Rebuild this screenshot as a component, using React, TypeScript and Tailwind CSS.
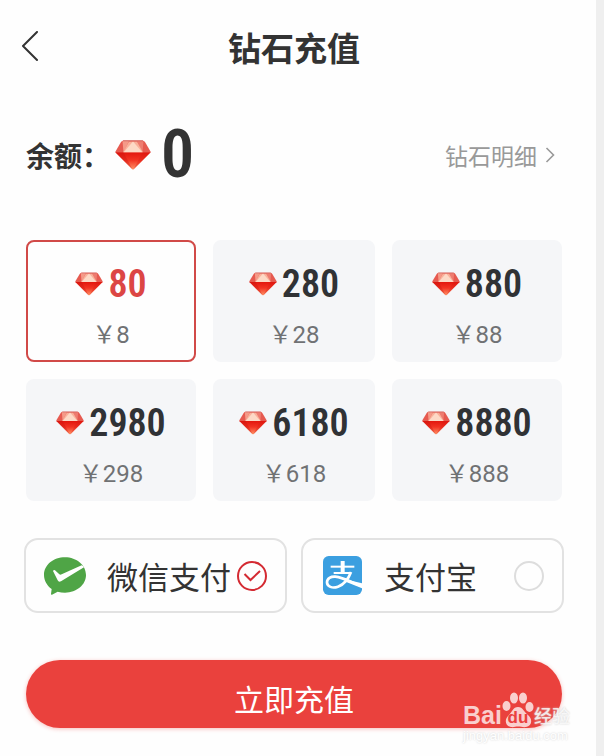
import { useId, useState } from "react";

const cjk = "font-['Noto_Sans_CJK_SC',sans-serif]";
const condensed = "font-['Roboto_Condensed',Roboto,sans-serif]";

const packages = [
  { diamonds: 80, price: 8 },
  { diamonds: 280, price: 28 },
  { diamonds: 880, price: 88 },
  { diamonds: 2980, price: 298 },
  { diamonds: 6180, price: 618 },
  { diamonds: 8880, price: 888 },
];

function Diamond({ className }: { className: string }) {
  const id = useId();
  return (
    <svg viewBox="0 0 36 30" className={className} aria-hidden="true">
      <defs>
        <linearGradient id={id} x1="0" y1="0" x2="0" y2="1">
          <stop offset="0" stopColor="#e3170e" />
          <stop offset="0.45" stopColor="#f23322" />
          <stop offset="1" stopColor="#ff9468" />
        </linearGradient>
      </defs>
      <path d="M8.5 .5H27.5Q29 .5 30 2L35.5 11.5Q36 12.5 35 13H1Q0 12.5 .5 11.5L6 2Q7 .5 8.5 .5Z" fill="#e65a50" />
      <path d="M7.5 1L14 1L8.5 12.5Z" fill="#f59a88" />
      <path d="M28.5 1L22 1L27.5 12.5Z" fill="#ee7c70" />
      <path d="M14 1.5H22L28 12.5H8Z" fill="#f9b09a" />
      <path d="M18 1.5L27.5 12.5H8.5Z" fill="#fdd9c6" />
      <path d="M.5 12.5H35.5L19 29Q18 30 17 29Z" fill={`url(#${id})`} />
      <path d="M.5 12.5H8.5L17.5 29.5Z" fill="#c91410" opacity=".35" />
      <path d="M35.5 12.5H27.5L18.5 29.5Z" fill="#d81c14" opacity=".3" />
      <path d="M8 .8H28" stroke="#d0605a" strokeWidth=".8" />
    </svg>
  );
}

function WechatPayIcon() {
  return (
    <svg viewBox="0 0 126 114" className="h-[38px] w-[42px]" aria-hidden="true">
      <path
        d="M63 1C28 1 0 24 0 54c0 17 9 32 23 42l-2 15c0 2 1 3 3 2l17-9c7 2 14 3 22 3 35 0 63-24 63-53S98 1 63 1Z"
        fill="#4fa546"
      />
      <path d="M27 42q2-4 6-2l13 12q3 2 7 0l60-27q5 1 7 6L51 73q-7 4-10-3Z" fill="#fff" />
    </svg>
  );
}

function AlipayIcon() {
  return (
    <svg viewBox="0 0 117 117" className="h-[39px] w-[39px]" aria-hidden="true">
      <rect width="117" height="117" rx="17" fill="#3b9fe0" />
      <g fill="none" stroke="#fff">
        <path d="M59 15V50" strokeWidth="12" />
        <path d="M23 32H94" strokeWidth="6" />
        <path d="M32 51H84" strokeWidth="6" />
        <path
          d="M84 48C76 70 62 86 45 92C28 98 12 92 12 79C12 67 24 61 37 62C58 64 80 76 117 91"
          strokeWidth="8"
        />
      </g>
      <path d="M72 71L117 82V97L68 77Z" fill="#fff" />
    </svg>
  );
}

const methods = [
  { id: "wechat", name: "微信支付", icon: <WechatPayIcon /> },
  { id: "alipay", name: "支付宝", icon: <AlipayIcon /> },
];

function Watermark() {
  return (
    <div className="pointer-events-none absolute top-[692px] right-[34px] w-[107px] text-white/75">
      <div className="flex h-9 items-end">
        <span className="font-['Liberation_Sans',sans-serif] text-[25px] leading-[26px] font-bold">Bai</span>
        <span className="relative h-9 w-8 shrink-0">
          <svg viewBox="0 0 32 36" className="h-9 w-8" fill="currentColor" aria-hidden="true">
            <ellipse cx="4.5" cy="14" rx="4" ry="5" />
            <ellipse cx="12" cy="6" rx="4" ry="5.5" />
            <ellipse cx="21" cy="6" rx="4" ry="5.5" />
            <ellipse cx="27.5" cy="15" rx="4" ry="5" />
            <path d="M16 15c-5 0-6 5-9 8-5 4-4 11 2 12 3 .5 4-.5 7-.5s5 1 8 .5c6-1 7-8 2-12-4-3-5-8-10-8Z" />
          </svg>
          <span className="absolute inset-x-0 bottom-0 text-center font-['Liberation_Sans',sans-serif] text-[17px] leading-5 font-bold text-[#ea413d]">
            du
          </span>
        </span>
        <span className={`${cjk} text-[18px] leading-[26px] font-medium whitespace-nowrap [text-shadow:0_0_2px_#cccccc]`}>
          经验
        </span>
      </div>
      <div className="font-['Liberation_Sans',sans-serif] text-[13px] leading-4 text-white [text-shadow:0_0_2px_#cccccc]">
        jingyan.baidu.com
      </div>
    </div>
  );
}

export default function App() {
  const [selected, setSelected] = useState(80);
  const [method, setMethod] = useState("wechat");

  return (
    <div className="relative min-h-screen bg-[#efefef] pr-2">
      <main className={`${cjk} min-h-screen bg-[#fefefe] pr-8 pl-6 text-[#333333]`}>
        <header className="grid h-[94px] grid-cols-[40px_1fr_40px] items-center">
          <button type="button" aria-label="返回" className="-ml-1 flex h-10 w-6 items-center">
            <svg viewBox="0 0 20 32" className="h-8 w-5" fill="none" stroke="#333333" strokeWidth="2" aria-hidden="true">
              <path d="M17 1L3 15L17 29" strokeLinecap="round" strokeLinejoin="round" />
            </svg>
          </button>
          <h1 className="text-center text-[33px] leading-10 font-bold">钻石充值</h1>
        </header>

        <section className="mt-[21px] flex h-20 items-center justify-between px-[2px]">
          <div className="flex items-center">
            <span className="text-[28px] leading-10 font-bold">余额：</span>
            <Diamond className="ml-[5px] h-[30px] w-9" />
            <span className={`${condensed} ml-[10px] text-[66px] leading-[80px] font-semibold`}>0</span>
          </div>
          <a href="#details" className="flex items-center gap-2 text-[23px] leading-8 text-[#999999]">
            钻石明细
            <svg viewBox="0 0 10 16" className="mr-[7px] h-4 w-[10px]" fill="none" stroke="#999999" strokeWidth="1.6" aria-hidden="true">
              <path d="M1.5 1L8.5 8L1.5 15" />
            </svg>
          </a>
        </section>

        <section className="mt-[45px] grid grid-cols-[170fr_162fr_170fr] gap-[17px] px-[2px]">
          {packages.map(({ diamonds, price }) => {
            const active = diamonds === selected;
            return (
              <button
                key={diamonds}
                type="button"
                aria-pressed={active}
                onClick={() => setSelected(diamonds)}
                className={`flex h-[122px] flex-col items-center rounded-lg border-2 pt-[22px] ${
                  active ? "border-[#d14a48] bg-[#fefefe]" : "border-[#f5f6f8] bg-[#f5f6f8]"
                }`}
              >
                <span className="flex h-10 items-center gap-[5px]">
                  <Diamond className="h-6 w-7" />
                  <span className={`${condensed} text-[38px] leading-10 font-semibold ${active ? "text-[#dc4644]" : "text-[#303235]"}`}>
                    {diamonds}
                  </span>
                </span>
                <span className="mt-[17px] font-[Roboto,'Noto_Sans_CJK_SC',sans-serif] text-[24px] leading-7 text-[#707274]">
                  ￥{price}
                </span>
              </button>
            );
          })}
        </section>

        <section className="mt-[37px] grid grid-cols-2 gap-[14px]">
          {methods.map(({ id, name, icon }) => (
            <label key={id} className="flex h-[75px] items-center rounded-[14px] border-2 border-[#e2e2e2] px-[18px]">
              <span className="flex w-[42px] shrink-0 justify-center">{icon}</span>
              <span className="ml-[21px] text-[31px] leading-10 whitespace-nowrap">{name}</span>
              <span className="ml-auto grid shrink-0 place-items-center">
                <input
                  type="radio"
                  name="method"
                  checked={method === id}
                  onChange={() => setMethod(id)}
                  className="col-start-1 row-start-1 h-[30px] w-[30px] appearance-none rounded-full border-2 border-[#dddddd] checked:border-[#d42a32]"
                />
                {method === id && (
                  <svg viewBox="0 0 18 12" className="pointer-events-none col-start-1 row-start-1 h-3 w-[18px]" fill="none" stroke="#d42a32" strokeWidth="2" aria-hidden="true">
                    <path d="M1.5 4L7.5 10L17 1" />
                  </svg>
                )}
              </span>
            </label>
          ))}
        </section>

        <div className="mt-[47px] px-[2px]">
          <button
            type="button"
            className="h-[68px] w-full rounded-full bg-[#ea413d] pt-2 text-[30px] leading-10 text-white shadow-[0_1px_4px_#ea413d55]"
          >
            立即充值
          </button>
        </div>
      </main>
      <Watermark />
    </div>
  );
}
